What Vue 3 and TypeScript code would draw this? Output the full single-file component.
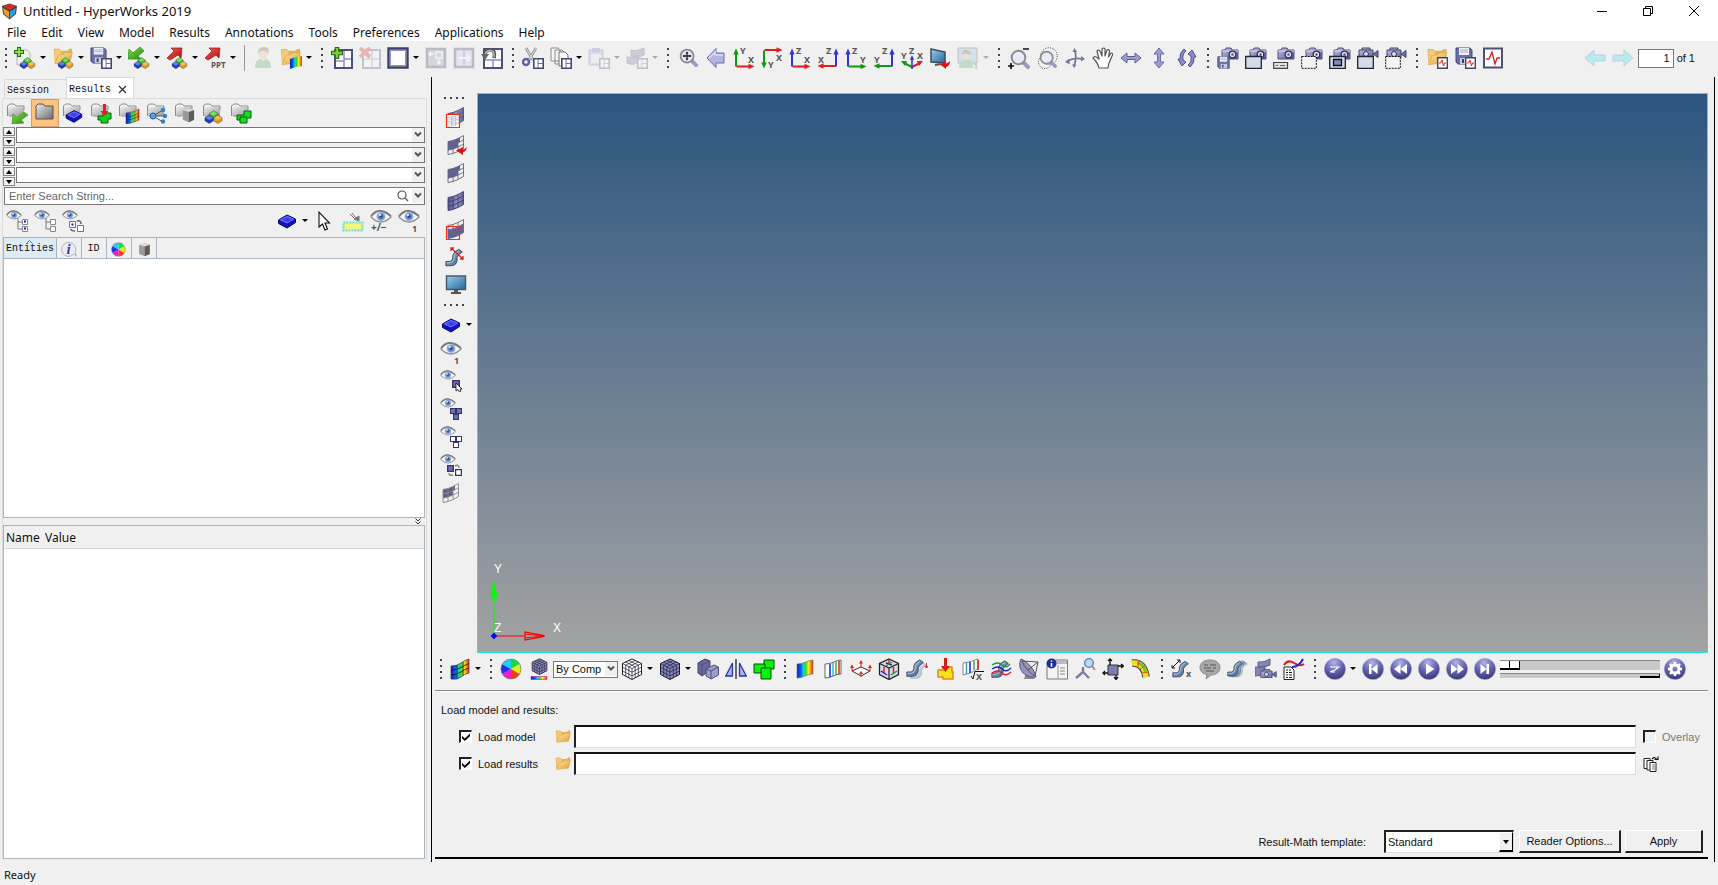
<script setup lang="ts">
import { h, ref } from 'vue'

interface Tool {
  icon: string
  label: string
  drop?: boolean
  off?: boolean
  active?: boolean
}

type Glyph = [x: number, y: number, text: string, kind?: string]

const glyphs: Record<string, Glyph[]> = {
  ppt: [[7, 21, 'PPT', 'tiny']],
  'ax-xy': [[7, 7, 'Y'], [15, 16, 'X']],
  'ax-xyb': [[7, 21, 'Y'], [15, 14, 'X']],
  'ax-xz': [[7, 7, 'Z'], [15, 16, 'X']],
  'ax-xzr': [[9, 7, 'Z'], [1, 16, 'X']],
  'ax-yz': [[7, 7, 'Z'], [15, 16, 'Y']],
  'ax-yzr': [[9, 7, 'Z'], [1, 16, 'Y']],
  'ax-iso': [[0, 12, 'Y'], [8, 7, 'Z'], [16, 12, 'X']],
  'user-view': [[16, 22, '1']],
  'eye-pm': [[1, 21, '+/−', 'wide']],
  'eye-one': [[14, 22, '1']],
  info: [[8, 17, 'i', 'info']],
  derived: [[14, 22, 'X']],
  trace: [[15, 19, 'x']],
}

function Icon(props: { name: string }) {
  const texts = (glyphs[props.name] ?? []).map(([x, y, text, kind]) => h('text', { x, y, class: ['glyph', kind] }, text))
  return h('svg', { class: 'ico', viewBox: '0 0 22 22' }, [h('use', { href: '#i-' + props.name }), ...texts])
}
Icon.props = ['name']

const t = (icon: string, label: string, extra: Partial<Tool> = {}): Tool => ({ icon, label, ...extra })
const drop = { drop: true }
const off = { off: true }

const menus = ['File', 'Edit', 'View', 'Model', 'Results', 'Annotations', 'Tools', 'Preferences', 'Applications', 'Help']

const topGroups: Tool[][] = [
  [
    t('new', 'New session', drop), t('open', 'Open session', drop), t('save', 'Save session', drop),
    t('import', 'Import', drop), t('export', 'Export', drop), t('ppt', 'Export to PPT', drop),
    t('sep', ''),
    t('user', 'User profile', off), t('results', 'Open results', drop),
  ],
  [
    t('win-add', 'Add page'), t('win-del', 'Delete page', off), t('win', 'Page layout', drop),
    t('win-expand', 'Expand window', off), t('win-shift', 'Shift window', off), t('win-swap', 'Swap windows'),
  ],
  [
    t('cut', 'Cut window'), t('copy', 'Copy window', drop),
    t('paste', 'Paste window', { drop: true, off: true }), t('overlay', 'Overlay window', { drop: true, off: true }),
  ],
  [
    t('fit', 'Fit view'), t('back', 'Previous view'), t('ax-xy', 'XY top'), t('ax-xyb', 'XY bottom'),
    t('ax-xz', 'XZ left'), t('ax-xzr', 'XZ right'), t('ax-yz', 'YZ front'), t('ax-yzr', 'YZ rear'),
    t('ax-iso', 'Isometric'), t('reverse', 'Reverse view'), t('user-view', 'User views', { drop: true, off: true }),
  ],
  [
    t('zoom-io', 'Zoom in or out'), t('zoom-box', 'Circle zoom'), t('rotate', 'Rotate'), t('pan', 'Pan'),
    t('h-move', 'Rotate left and right'), t('v-move', 'Rotate up and down'), t('spin', 'Spin'),
  ],
  [
    t('cam-save', 'Save image'), t('cam-page', 'Capture page'), t('cam-panel', 'Capture panel'),
    t('cam-area', 'Capture area'), t('cam-window', 'Capture window'), t('vid-page', 'Record page'),
    t('vid-area', 'Record area'),
  ],
  [t('wave-open', 'Open report'), t('wave-save', 'Save report'), t('wave', 'Report')],
]

const browserTools: Tool[] = [
  t('f-import', 'Import'), t('f-plain', 'Folder view', { active: true }), t('f-comp', 'Components'),
  t('f-load', 'Loads'), t('f-contour', 'Contours'), t('f-tree', 'Systems'), t('f-part', 'Parts'),
  t('f-asm', 'Assemblies'), t('f-set', 'Sets'),
]

const treeTools: Tool[] = [t('eye-all', 'Show all'), t('eye-none', 'Hide all'), t('eye-rev', 'Reverse display')]
const pickTools: Tool[] = [
  t('block', 'Entity type', drop), t('cursor', 'Select'), t('isolate', 'Isolate'),
  t('eye-pm', 'Show or hide'), t('eye-one', 'Show one'),
]

const sideA: Tool[] = [
  t('m-box', 'Mask window'), t('m-rev', 'Reverse mask'), t('m-mask', 'Mask'), t('m-all', 'Unmask all'),
  t('m-out', 'Mask outside'), t('m-adj', 'Unmask adjacent'), t('monitor', 'Display'),
]
const sideB: Tool[] = [
  t('block', 'Entity type', drop), t('eye-one', 'Isolate one'), t('eye-pick', 'Show picked'),
  t('eye-fill', 'Show all'), t('eye-open', 'Hide all'), t('eye-swap', 'Reverse'), t('m-grey', 'Mask elements'),
]

const modeTools: Tool[] = [t('contour-mesh', 'Load results', drop)]
const colorTools: Tool[] = [t('wheel', 'Colors'), t('cube-color', 'Color mode')]
const meshTools: Tool[] = [
  t('cube-wire', 'Wireframe', drop), t('cube-solid', 'Shaded', drop), t('parts', 'Transparency'),
  t('mirror', 'Symmetry'), t('green', 'Entity sets'),
]
const plotTools: Tool[] = [
  t('contour', 'Contour'), t('iso', 'Iso surface'), t('vector', 'Vector'), t('tensor', 'Tensor'),
  t('deform', 'Deformed'), t('free-body', 'Free body'), t('derived', 'Derived results'), t('stream', 'Streamlines'),
  t('dish', 'Tracking'), t('query', 'Query'), t('measure', 'Measures'), t('section', 'Section cut'), t('bend', 'Exploded view'),
]
const noteTools: Tool[] = [
  t('trace', 'Tracing'), t('note', 'Notes'), t('frames', 'Frames'), t('view-cam', 'View camera'), t('curves', 'Build plots'),
]
const playTools: Tool[] = [
  t('b-mode', 'Animation mode', drop), t('b-first', 'First frame'), t('b-prev', 'Previous frame'),
  t('b-play', 'Play'), t('b-next', 'Next frame'), t('b-last', 'Last frame'),
]

const search = ref('')
const page = ref('1')
const loadModel = ref(true)
const loadResults = ref(true)
const modelFile = ref('')
const resultFile = ref('')
const speed = ref(0)
const frame = ref(100)
</script>

<template>
  <div class="app">
    <svg class="defs" width="0" height="0" aria-hidden="true">
      <defs>
        <linearGradient id="g-steel" x1="0" y1="0" x2="1" y2="1"><stop offset="0" stop-color="#c4c4ea" /><stop offset="1" stop-color="#56568e" /></linearGradient>
        <linearGradient id="g-folder" x1="0" y1="0" x2="1" y2="1"><stop offset="0" stop-color="#fce6a4" /><stop offset="1" stop-color="#e0a030" /></linearGradient>
        <linearGradient id="g-grey" x1="0" y1="0" x2="1" y2="1"><stop offset="0" stop-color="#ececec" /><stop offset="1" stop-color="#6c6c6c" /></linearGradient>
        <linearGradient id="g-red" x1="0" y1="0" x2="1" y2="1"><stop offset="0" stop-color="#f0605c" /><stop offset="1" stop-color="#b00a10" /></linearGradient>
        <linearGradient id="g-green" x1="0" y1="0" x2="1" y2="1"><stop offset="0" stop-color="#8be04e" /><stop offset="1" stop-color="#1d8a0d" /></linearGradient>
        <linearGradient id="g-screen" x1="0" y1="0" x2="1" y2="1"><stop offset="0" stop-color="#9cd0f0" /><stop offset="1" stop-color="#22629c" /></linearGradient>
        <linearGradient id="g-tube" x1="0" y1="0" x2="1" y2="1"><stop offset="0" stop-color="#a5bcd4" /><stop offset="1" stop-color="#3d5f88" /></linearGradient>
        <linearGradient id="g-mesh" x1="0" y1="0" x2="1" y2="0"><stop offset="0" stop-color="#50508c" /><stop offset=".6" stop-color="#9494cc" /><stop offset="1" stop-color="#64649c" /></linearGradient>
        <linearGradient id="g-rain" x1="0" y1="0" x2="1" y2="0">
          <stop offset="0" stop-color="#0a1ec8" /><stop offset=".25" stop-color="#0a5ef0" /><stop offset=".4" stop-color="#12d8c8" />
          <stop offset=".55" stop-color="#30d830" /><stop offset=".72" stop-color="#f4f020" /><stop offset="1" stop-color="#f03010" />
        </linearGradient>
        <radialGradient id="g-ball" cx=".45" cy=".2" r=".8"><stop offset="0" stop-color="#b4b4ea" /><stop offset=".5" stop-color="#6868b4" /><stop offset="1" stop-color="#363674" /></radialGradient>
        <radialGradient id="g-iris"><stop offset="0" stop-color="#16244e" /><stop offset=".3" stop-color="#4468ac" /><stop offset="1" stop-color="#a4c4f0" /></radialGradient>
      </defs>

      <!-- shared parts -->
      <symbol id="p-block" viewBox="0 0 9 9" overflow="visible">
        <path d="M.5 3.2 4.5.6 8.5 3.2V6L4.5 8.6.5 6Z" fill="currentColor" stroke="#111" stroke-opacity=".45" stroke-width=".7" />
        <path d="M1 3.2 4.5 1 8 3.2 4.5 5.4Z" fill="#fff" opacity=".35" />
      </symbol>
      <symbol id="p-rgb" viewBox="0 0 17 13">
        <use href="#p-block" x="4" y="0" width="9" height="9" color="#3cc024" />
        <use href="#p-block" x="0" y="4" width="9" height="9" color="#1a3cc8" />
        <use href="#p-block" x="8" y="4" width="9" height="9" color="#e09c1c" />
      </symbol>
      <symbol id="p-folder" viewBox="0 0 22 22">
        <path d="M1 3Q1 2 2 2H7L9 4H16L18 2H21V9L19 17H2Z" fill="#e2b25c" />
        <path d="M2 3H7L9 5V8L5 10 2 17Z" fill="#f2cc7c" />
        <path d="M6 9 11 8 14 6 21.500 6 17 17 2 18.500Z" fill="url(#g-folder)" stroke="#d09a3c" stroke-width=".5" />
      </symbol>
      <symbol id="p-grey-folder" viewBox="0 0 22 22">
        <path d="M1.500 14V4L3.500 2H8L10 4H18V8M8 14H3" fill="none" stroke="#8c8c8c" />
        <path d="M2 5H18V14H2Z" fill="url(#g-grey)" opacity=".65" />
      </symbol>
      <symbol id="p-floppy" viewBox="0 0 18 18">
        <path d="M1 1H15L17 3V17H3L1 15Z" fill="#6a6fa6" stroke="#44487c" />
        <path d="M4 1H14V8H4Z" fill="#eef0fa" /><path d="M5 3H13M5 5H13" stroke="#a8acc8" />
        <path d="M5 11H14V17H5Z" fill="#c8cce0" /><path d="M7 12H9V16H7Z" fill="#3a3e6c" />
      </symbol>
      <symbol id="p-win" viewBox="0 0 11 11">
        <path d="M.8.800H10.200V10.200H.800Z" fill="#fff" stroke="#44486c" stroke-width="1.600" /><path d="M5 1V10M5 5.500H10" stroke="#6a6ea8" />
      </symbol>
      <symbol id="p-wave" viewBox="0 0 11 12">
        <path d="M.7.700H10.300V11.300H.700Z" fill="#fff" stroke="#404468" stroke-width="1.400" /><path d="M2 6H3.500L5 3 6.500 9 7.500 6H9" fill="none" stroke="#d82020" />
      </symbol>
      <symbol id="p-eye" viewBox="0 0 22 13">
        <path d="M1 7Q5 1 11 1T21 7Q16 12 11 12T1 7Z" fill="#f6f6f6" stroke="#909090" stroke-width="1.300" />
        <path d="M1 6Q6 0 11 1T21 6" fill="none" stroke="#7c7c7c" stroke-width="1.800" />
        <circle cx="11" cy="6.500" r="4.500" fill="url(#g-iris)" /><circle cx="9.800" cy="5" r="1.200" fill="#fff" opacity=".8" />
      </symbol>
      <symbol id="p-arrow" viewBox="0 0 6 18" overflow="visible"><path d="M3 18V5" stroke="currentColor" stroke-width="2" /><path d="M.3 6 3 0 5.700 6Z" fill="currentColor" /></symbol>
      <symbol id="p-lines" viewBox="0 0 22 22">
        <path d="M3 7.500 8 6.500 13 4.500 18.500 1.500M3 11.800 8 10.800 13 8.800 18.500 5.800M3 16.100 8 15.100 13 13.100 18.500 10.100M3 20.500 8 19.500 13 17.500 18.500 14.500M3 7.500V20.500M8 6.500V19.500M13 4.500V17.500M18.500 1.500V14.500" fill="none" stroke="currentColor" stroke-width=".9" />
      </symbol>
      <symbol id="p-cam" viewBox="0 0 18 13">
        <path d="M1 3H4L5 1H10L11 3H17V12H1Z" fill="url(#g-steel)" stroke="#50507c" />
        <path d="M1 4H17" stroke="#dcdcf4" /><circle cx="11.500" cy="7.500" r="3.300" fill="#dfe3f4" stroke="#2c2c58" stroke-width="1.300" /><circle cx="11.500" cy="7.500" r="1.300" fill="#5c5c8c" />
      </symbol>
      <symbol id="p-vid" viewBox="0 0 21 12">
        <path d="M1 3H15V11H1ZM15 7 20 3.500V10.500L15 7M4 3V1H12V3" fill="url(#g-steel)" stroke="#44446c" /><circle cx="8" cy="7" r="2.500" fill="#d8dcf0" stroke="#33335e" />
      </symbol>
      <symbol id="p-lens" viewBox="0 0 20 20">
        <path d="M13 13 18 18" stroke="#9a9ac8" stroke-width="4" stroke-linecap="round" />
        <circle cx="8.500" cy="8.500" r="6.800" fill="#e8ecfa" stroke="#8c8c94" stroke-width="2" />
      </symbol>
      <symbol id="p-ball" viewBox="0 0 22 22"><circle cx="11" cy="11" r="10.600" fill="url(#g-ball)" stroke="#9a9ac8" stroke-width=".6" /></symbol>
      <symbol id="p-cube" viewBox="0 0 22 22">
        <path d="M11 1 20.500 5.500V16.500L11 21.500 1.500 16.500V5.500Z" fill="currentColor" stroke="#1c1c30" />
        <path d="M1.500 5.500 11 10.500 20.500 5.500M11 10.500V21.500M4.600 4 14.200 8.800V19.800M7.800 2.500 17.300 7.200V18.200M17.400 4 7.800 8.800V19.800M14.200 2.500 4.700 7.200V18.200M1.500 9.200 11 14.200 20.500 9.200M1.500 12.900 11 17.900 20.500 12.900" fill="none" stroke="#1c1c30" stroke-width=".7" />
      </symbol>
      <symbol id="p-tube" viewBox="0 0 22 22">
        <path d="M1 15H6Q9 14 9 11V8Q10 4 16 1L20 4Q15 7 14 10V14Q13 20 7 20H1Z" fill="url(#g-tube)" stroke="#2a4262" />
        <path d="M2 16.500H6Q10.500 16 10.500 11.500V8.500Q12 5 16 3" fill="none" stroke="#c8d8e8" stroke-width=".9" />
      </symbol>
      <symbol id="p-sq" viewBox="0 0 7 7"><path d="M.6.600H6.400V6.400H.600Z" fill="currentColor" stroke="#34346c" stroke-width="1.200" /></symbol>
      <symbol id="p-tree" viewBox="0 0 11 14"><path d="M1 0V11H5M1 4H5" fill="none" stroke="#777" /><path d="M5.500 1.500H10.500V6.500H5.500ZM5.500 8.500H10.500V13.500H5.500Z" fill="#fff" stroke="#888" /></symbol>

      <!-- file and page tools -->
      <symbol id="i-new" viewBox="0 0 22 22"><path d="M3 3H13L16 6V18H3Z" fill="#f0f0f0" stroke="#b4b4b4" /><path d="M5 0V10M0 5H10" stroke="#247010" stroke-width="4" /><path d="M5 1V9M1 5H9" stroke="#8ade4c" stroke-width="2" /><use href="#p-rgb" x="5" y="10" width="17" height="12" /></symbol>
      <symbol id="i-open" viewBox="0 0 22 22"><use href="#p-folder" x="0" y="0" width="22" height="20" /><use href="#p-rgb" x="5" y="10" width="17" height="12" /></symbol>
      <symbol id="i-save" viewBox="0 0 22 22"><use href="#p-floppy" x="0" y="0" width="17" height="17" /><use href="#p-win" x="11" y="11" width="11" height="11" /></symbol>
      <symbol id="i-import" viewBox="0 0 22 22"><path d="M12 0 16 4 10 9 13 12 0 12 1 2 5 6Z" fill="url(#g-green)" stroke="#2c8a1a" stroke-width=".7" /><use href="#p-rgb" x="5" y="10" width="17" height="12" /></symbol>
      <symbol id="i-export" viewBox="0 0 22 22"><path d="M1 11 8 4 5 1 16 1 15 11 12 8 4 13Z" fill="url(#g-red)" stroke="#a01010" stroke-width=".7" /><use href="#p-rgb" x="5" y="10" width="17" height="12" /></symbol>
      <symbol id="i-ppt" viewBox="0 0 22 22"><path d="M1 11 8 4 5 1 16 1 15 11 12 8 4 13Z" fill="url(#g-red)" stroke="#a01010" stroke-width=".7" /></symbol>
      <symbol id="i-user" viewBox="0 0 22 22"><path d="M3 21Q3 13 8 12L11 14 14 12Q19 13 19 21Z" fill="#48a860" /><ellipse cx="11" cy="7" rx="4.500" ry="6" fill="#e8c090" /><path d="M6 7Q5 0 12 0T16 7Q14 3 10 4Q7 4 6 7Z" fill="#8a6a40" /></symbol>
      <symbol id="i-results" viewBox="0 0 22 22"><use href="#p-folder" x="0" y="0" width="21" height="21" /><path d="M10 12 16 10 22 9V19L16 20 10 22Z" fill="url(#g-rain)" /></symbol>
      <symbol id="i-win" viewBox="0 0 22 22"><path d="M1.500 1.500H20.500V20.500H1.500Z" fill="#fdfdff" stroke="#3c4064" stroke-width="2.400" /><path d="M3.500 3.500H18.500V18.500H3.500Z" fill="none" stroke="#8c90cc" /></symbol>
      <symbol id="i-win-add" viewBox="0 0 22 22"><path d="M4 3H21V21H4Z" fill="#fdfdff" stroke="#4c5078" stroke-width="2" /><path d="M13 4V20M13 12H20M5 14H13" stroke="#8c90cc" stroke-width="1.500" /><path d="M6 0V12M0 6H12" stroke="#2a6a10" stroke-width="4.600" /><path d="M6 1V11M1 6H11" stroke="#7ccc3c" stroke-width="2.400" /></symbol>
      <symbol id="i-win-del" viewBox="0 0 22 22"><path d="M4 3H21V21H4Z" fill="#fdfdff" stroke="#4c5078" stroke-width="2" /><path d="M13 4V20M5 12H20" stroke="#8c90cc" stroke-width="1.500" /><path d="M1 1 11 10M11 1 1 10" stroke="#d02020" stroke-width="4" /></symbol>
      <symbol id="i-win-expand" viewBox="0 0 22 22"><path d="M2 2H20V20H2Z" fill="#8c90b8" stroke="#34375c" stroke-width="2.500" /><path d="M4 7H9M6 5 4 7 6 9M11 5H17V11H11ZM14 12V17M12 15 14 17 16 15" fill="none" stroke="#fff" stroke-width="1.500" /></symbol>
      <symbol id="i-win-shift" viewBox="0 0 22 22"><path d="M2 2H20V20H2Z" fill="#c4c8e4" stroke="#34375c" stroke-width="2.500" /><path d="M11 3V19" stroke="#7074b0" stroke-width="2" /><path d="M6 11H16M14 8 17 11 14 14" fill="none" stroke="#fff" stroke-width="1.800" /></symbol>
      <symbol id="i-win-swap" viewBox="0 0 22 22"><path d="M3 2H21V21H3Z" fill="#fdfdff" stroke="#4c5078" stroke-width="2" /><path d="M12 12V20M4 13H20" stroke="#8c90cc" stroke-width="1.500" /><path d="M13 11Q15 3 9 3Q4 3 4 8" fill="none" stroke="#555" stroke-width="3.600" /><path d="M13 10Q14 3.500 9 3.500Q4.500 4 4 8" fill="none" stroke="#b4b4b4" stroke-width="1.600" /><path d="M0 7H8L4 13Z" fill="#666" /></symbol>
      <symbol id="i-cut" viewBox="0 0 22 22"><path d="M4 1 11 13M14 1 7 13" stroke="#909090" stroke-width="2.600" /><path d="M4 1 11 13M14 1 7 13" stroke="#e4e4e4" /><circle cx="4" cy="15" r="3" fill="none" stroke="#5c60b0" stroke-width="2.400" /><use href="#p-win" x="11" y="11" width="11" height="11" /></symbol>
      <symbol id="i-copy" viewBox="0 0 22 22"><path d="M1 1H8L10 3V14H1ZM5 3H12L15 6V17H5Z" fill="#f4f4f4" stroke="#8c8c8c" /><path d="M9 5H15L18 8V19H9Z" fill="#fcfcfc" stroke="#707070" /><use href="#p-win" x="11" y="11" width="11" height="11" /></symbol>
      <symbol id="i-paste" viewBox="0 0 22 22"><path d="M1 3H15V18H1Z" fill="#a4a8dc" stroke="#6468a4" /><path d="M4 1H12V5H4Z" fill="#777aaa" /><path d="M3 7H13V16H3Z" fill="#e8eaf8" /><use href="#p-win" x="11" y="11" width="11" height="11" /></symbol>
      <symbol id="i-overlay" viewBox="0 0 22 22"><path d="M5 3Q10 5 18 1V8Q10 12 5 9ZM1 10Q6 12 13 8V15Q6 19 1 16Z" fill="#70749c" stroke="#505070" /><use href="#p-win" x="11" y="11" width="11" height="11" /></symbol>

      <!-- view tools -->
      <symbol id="i-fit" viewBox="0 0 22 22"><use href="#p-lens" x="2" y="1" width="19" height="19" /><path d="M10 5V13M6 9H14" stroke="#223" stroke-width="1.300" /><path d="M8.500 6.500 10 4.500 11.500 6.500ZM8.500 11.500 10 13.500 11.500 11.500ZM7.500 7.500 5.500 9 7.500 10.500ZM12.500 7.500 14.500 9 12.500 10.500Z" fill="#223" /></symbol>
      <symbol id="i-back" viewBox="0 0 22 22"><path d="M2 11 11 1.500V6H19V16H11V20.500Z" fill="#b4b4e0" stroke="#6c6ca8" /><path d="M4 11 10 5V8H18" fill="none" stroke="#dedef6" stroke-width="1.500" /></symbol>
      <symbol id="i-ax-xy" viewBox="0 0 22 22"><use href="#p-arrow" x="0" y="1" width="6" height="19" color="#0c9a10" /><use href="#p-arrow" width="6" height="19" transform="translate(22 16.500) rotate(90)" color="#e01c1c" /></symbol>
      <symbol id="i-ax-xyb" viewBox="0 0 22 22"><use href="#p-arrow" width="6" height="19" transform="translate(6 22) rotate(180)" color="#0c9a10" /><use href="#p-arrow" width="6" height="19" transform="translate(22 0) rotate(90)" color="#e01c1c" /></symbol>
      <symbol id="i-ax-xz" viewBox="0 0 22 22"><use href="#p-arrow" width="6" height="19" transform="translate(22 16.500) rotate(90)" color="#e01c1c" /><use href="#p-arrow" x="0" y="1" width="6" height="19" color="#3434d0" /></symbol>
      <symbol id="i-ax-xzr" viewBox="0 0 22 22"><use href="#p-arrow" width="6" height="19" transform="translate(0 22) rotate(-90)" color="#e01c1c" /><use href="#p-arrow" x="16" y="1" width="6" height="19" color="#3434d0" /></symbol>
      <symbol id="i-ax-yz" viewBox="0 0 22 22"><use href="#p-arrow" width="6" height="19" transform="translate(22 16.500) rotate(90)" color="#0c9a10" /><use href="#p-arrow" x="0" y="1" width="6" height="19" color="#3434d0" /></symbol>
      <symbol id="i-ax-yzr" viewBox="0 0 22 22"><use href="#p-arrow" width="6" height="19" transform="translate(0 22) rotate(-90)" color="#0c9a10" /><use href="#p-arrow" x="16" y="1" width="6" height="19" color="#3434d0" /></symbol>
      <symbol id="i-ax-iso" viewBox="0 0 22 22"><path d="M11 20 3 16" stroke="#0c9a10" stroke-width="2" /><path d="M0 14H6L4 19Z" fill="#0c9a10" /><path d="M11 20 19 16" stroke="#e01c1c" stroke-width="2" /><path d="M22 14H16L18 19Z" fill="#e01c1c" /><use href="#p-arrow" x="8" y="8" width="6" height="14" color="#3434d0" /></symbol>
      <symbol id="i-reverse" viewBox="0 0 22 22"><path d="M2 2 16 5V16L2 15Z" fill="url(#g-screen)" stroke="#3a4a5c" stroke-width="1.500" /><path d="M6 18 12 17" stroke="#555" stroke-width="2" /><path d="M21 14Q21 19 17 20V22L11 17.500 17 14V16.500Q19 16 21 14Z" fill="#e01414" /></symbol>
      <symbol id="i-user-view" viewBox="0 0 22 22"><path d="M1 1H20V16H1Z" fill="#90bce0" stroke="#456" /><ellipse cx="9" cy="8" rx="3.500" ry="4.500" fill="#e8c090" /><path d="M5 8Q5 2 10 3T13 8Q9 5 5 8Z" fill="#7a5a30" /><path d="M2 21Q2 14 7 13H12Q16 14 16 21Z" fill="#48a860" /></symbol>
      <symbol id="i-zoom-io" viewBox="0 0 22 22"><use href="#p-lens" x="2" y="2" width="20" height="20" /><path d="M15 2H21M0 19H6M3 16V22" stroke="#111" stroke-width="1.700" /></symbol>
      <symbol id="i-zoom-box" viewBox="0 0 22 22"><circle cx="13" cy="9" r="8.300" fill="none" stroke="#333" stroke-dasharray="1 1.500" /><circle cx="9" cy="15" r="6.500" fill="none" stroke="#333" stroke-dasharray="1 1.500" /><use href="#p-lens" x="3" y="3" width="18" height="18" /></symbol>
      <symbol id="i-rotate" viewBox="0 0 22 22"><path d="M3 14Q11 10 18 12M10 19Q13 11 11 4" fill="none" stroke="#74789c" stroke-width="1.800" /><path d="M8.500 5 10.500 1 13 5ZM17 9 21 12 17 14.500ZM5 12 1 15 6 17.500ZM8 17.500 10 21 12.500 17.500Z" fill="#74789c" /></symbol>
      <symbol id="i-pan" viewBox="0 0 22 22"><path d="M7 21Q6 16 1 11Q3 8 7 12L5 4Q7 2 8.500 5L10 9V2Q12 0 13 2V9L15 3Q17 2 17.500 4L16.500 10 19 6Q21 6 20.500 8L17 16 16 21Z" fill="#fff" stroke="#555" stroke-width="1.200" stroke-linejoin="round" /></symbol>
      <symbol id="i-h-move" viewBox="0 0 22 22"><path d="M1 11 7 6V9.500H15V6L21 11 15 16V12.500H7V16Z" fill="#9c9cd4" stroke="#5c5c98" /></symbol>
      <symbol id="i-v-move" viewBox="0 0 22 22"><path d="M11 1 16 7H12.500V15H16L11 21 6 15H9.500V7H6Z" fill="#9c9cd4" stroke="#6c6ca8" /></symbol>
      <symbol id="i-spin" viewBox="0 0 22 22"><path d="M8 2Q3 6 4 12L2 12 6 19 10 15 7 13Q6 7 10 4ZM14 20Q19 16 18 10H20L16 3 12 7 15 9Q16 15 12 18Z" fill="#8c8cc8" stroke="#50508c" /></symbol>
      <symbol id="i-cam-save" viewBox="0 0 22 22"><use href="#p-cam" x="4" y="0" width="18" height="13" /><use href="#p-floppy" x="0" y="9" width="13" height="13" /></symbol>
      <symbol id="i-cam-page" viewBox="0 0 22 22"><use href="#p-cam" x="4" y="0" width="18" height="13" /><path d="M.7 9.500H16.300V21.300H.700Z" fill="#d4dce8" stroke="#223" stroke-width="1.300" /></symbol>
      <symbol id="i-cam-panel" viewBox="0 0 22 22"><use href="#p-cam" x="4" y="0" width="18" height="13" /><path d="M.7 15.500H14.500V21.300H.700Z" fill="#e0e4d8" stroke="#444" stroke-width="1.200" /><path d="M3 18.500H5M7 18.500H12" stroke="#666" /></symbol>
      <symbol id="i-cam-area" viewBox="0 0 22 22"><use href="#p-cam" x="4" y="0" width="18" height="13" /><path d="M.7 9.500H15.300V21.300H.700Z" fill="#f4f4f4" stroke="#111" stroke-dasharray="2 1" /></symbol>
      <symbol id="i-cam-window" viewBox="0 0 22 22"><use href="#p-cam" x="4" y="0" width="18" height="13" /><path d="M.7 9.500H16.300V21.300H.700Z" fill="#d4dce8" stroke="#223" stroke-width="1.300" /><path d="M4.500 12.500H12.500V18.500H4.500Z" fill="#8088c0" stroke="#111" stroke-width="1.300" /></symbol>
      <symbol id="i-vid-page" viewBox="0 0 22 22"><use href="#p-vid" x="1" y="0" width="21" height="12" /><path d="M.7 9.500H16.300V21.300H.700Z" fill="#d4dce8" stroke="#223" stroke-width="1.300" /></symbol>
      <symbol id="i-vid-area" viewBox="0 0 22 22"><use href="#p-vid" x="1" y="0" width="21" height="12" /><path d="M.7 9.500H15.300V21.300H.700Z" fill="#f4f4f4" stroke="#111" stroke-dasharray="2 1" /></symbol>
      <symbol id="i-wave-open" viewBox="0 0 22 22"><use href="#p-folder" x="0" y="0" width="22" height="21" /><use href="#p-wave" x="11" y="10" width="11" height="12" /></symbol>
      <symbol id="i-wave-save" viewBox="0 0 22 22"><use href="#p-floppy" x="1" y="0" width="18" height="18" /><use href="#p-wave" x="11" y="10" width="11" height="12" /></symbol>
      <symbol id="i-wave" viewBox="0 0 22 22"><path d="M2 1.500H20V20.500H2Z" fill="#fff" stroke="#4c507c" stroke-width="2" /><path d="M4 12H7L10 5 13 17 15 11H18" fill="none" stroke="#d82020" stroke-width="1.300" /></symbol>
      <symbol id="i-nav" viewBox="0 0 22 22"><path d="M1 11 10 3V8H21V14H10V19Z" fill="#bce8ee" stroke="#acd8e0" /></symbol>

      <!-- browser tools -->
      <symbol id="i-f-import" viewBox="0 0 22 22"><use href="#p-grey-folder" width="22" height="22" /><path d="M18 10 22 13 15 18 18 21 6 22 7 12 11 15Z" fill="url(#g-green)" stroke="#3a8a18" stroke-width=".6" /></symbol>
      <symbol id="i-f-plain" viewBox="0 0 22 22"><path d="M2 4 4 2H9L11 4H19V17H2Z" fill="url(#g-grey)" stroke="#555" /></symbol>
      <symbol id="i-block" viewBox="0 0 22 22"><path d="M2.500 10 11 5 19.500 9V12.500L11 18 2.500 13.500Z" fill="#1414b4" stroke="#06066c" /><path d="M3.500 10 11 5.500 18.500 9.200 11 13.500Z" fill="#3c40ee" /><path d="M4.500 10 11 6.500 17.500 9.200 11 12.800Z" fill="none" stroke="#7c80ff" stroke-width=".8" /></symbol>
      <symbol id="i-f-comp" viewBox="0 0 22 22"><use href="#p-grey-folder" width="22" height="22" /><use href="#i-block" x="2" y="4" width="20" height="20" /></symbol>
      <symbol id="i-f-load" viewBox="0 0 22 22"><use href="#p-grey-folder" width="22" height="22" /><path d="M8 14H13V11H21V17H18V21H11V18H8Z" fill="#10d020" stroke="#075a0c" /><path d="M13 2H16V9H18.500L14.500 14 10.500 9H13Z" fill="#e02020" /></symbol>
      <symbol id="i-f-contour" viewBox="0 0 22 22"><use href="#p-grey-folder" width="22" height="22" /><path d="M8 11Q15 11 21 7V18Q15 21 8 22Z" fill="url(#g-rain)" stroke="#333" stroke-width=".5" /><path d="M12 11V21M17 9V20M8 15Q15 15 21 11M8 18Q15 18 21 14" fill="none" stroke="#222" stroke-width=".6" /></symbol>
      <symbol id="i-f-tree" viewBox="0 0 22 22"><use href="#p-grey-folder" width="22" height="22" /><path d="M7 14 17 8M7 14H18M7 14 17 20" stroke="#555" /><circle cx="7" cy="14" r="3" fill="#58a0e8" stroke="#1a5aa8" /><circle cx="17" cy="8" r="2.200" fill="#2a80d8" /><circle cx="19" cy="14" r="2.200" fill="#2a80d8" /><circle cx="17" cy="19.500" r="2.200" fill="#2a80d8" /></symbol>
      <symbol id="i-part" viewBox="0 0 22 22"><path d="M5 6 12 4 18 6V17L12 20 5 17Z" fill="#999" /><path d="M5 6 12 4 18 6 12 8Z" fill="#ddd" /><path d="M12 8 18 6V17L12 20Z" fill="#5c5c5c" /></symbol>
      <symbol id="i-f-part" viewBox="0 0 22 22"><use href="#p-grey-folder" width="22" height="22" /><use href="#i-part" x="4" y="3" width="20" height="19" /></symbol>
      <symbol id="i-f-asm" viewBox="0 0 22 22"><use href="#p-grey-folder" width="22" height="22" /><use href="#p-rgb" x="1" y="8" width="21" height="14" /></symbol>
      <symbol id="i-f-set" viewBox="0 0 22 22"><use href="#p-grey-folder" width="22" height="22" /><path d="M7 13H14V9H21V16H17V21H10V18H7ZM10 18V15H17" fill="#10e020" stroke="#075a0c" /></symbol>
      <symbol id="i-eye-all" viewBox="0 0 22 22"><use href="#p-eye" x="0" y="0" width="16" height="10" /><use href="#p-tree" x="11" y="8" width="11" height="14" /><path d="M18 11.500H20M18 18.500H20" stroke="#1414c8" stroke-width="2" /></symbol>
      <symbol id="i-eye-none" viewBox="0 0 22 22"><use href="#p-eye" x="0" y="0" width="16" height="10" /><use href="#p-tree" x="11" y="8" width="11" height="14" /></symbol>
      <symbol id="i-eye-rev" viewBox="0 0 22 22"><use href="#p-eye" x="0" y="0" width="16" height="10" /><path d="M7.500 11.500H13.500V17.500H7.500ZM15.500 15.500H21.500V21.500H15.500Z" fill="#fff" stroke="#777" /><path d="M9.500 14.500H11.500" stroke="#1414c8" stroke-width="2" /><path d="M15 11Q19 10 19 14M13 21Q9 21 9 19" fill="none" stroke="#666" stroke-width="1.500" /></symbol>
      <symbol id="i-cursor" viewBox="0 0 22 22"><path d="M5 2V17L8.500 14 11 20 13.500 19 11 13H15.500Z" fill="#fff" stroke="#111" stroke-width="1.100" /></symbol>
      <symbol id="i-isolate" viewBox="0 0 22 22"><path d="M1.500 12.500H20.500V20.500H1.500Z" fill="#f6f47c" stroke="#64dce0" stroke-dasharray="2 1" stroke-width="2" /><path d="M8 4 12 8M10 3 14 8M12 9 17 11 17 6Z" fill="#777" stroke="#777" /></symbol>
      <symbol id="i-eye-pm" viewBox="0 0 22 22"><use href="#p-eye" x="0" y="0" width="22" height="13" /></symbol>
      <symbol id="i-eye-one" viewBox="0 0 22 22"><use href="#p-eye" x="0" y="0" width="22" height="13" /></symbol>
      <symbol id="i-info" viewBox="0 0 22 22"><path d="M11 3A8.500 8.500 0 1 0 17 17L20 20 18.500 15A8.500 8.500 0 0 0 11 3Z" fill="#ececf2" stroke="#a4a4b0" /></symbol>
      <symbol id="i-wheel" viewBox="0 0 22 22">
        <path d="M11 11V1A10 10 0 0 1 19.700 6Z" fill="#18d84c" /><path d="M11 11 19.700 6A10 10 0 0 1 19.700 16Z" fill="#d8f01c" /><path d="M11 11 19.700 16A10 10 0 0 1 11 21Z" fill="#f43c1c" /><path d="M11 11V21A10 10 0 0 1 2.300 16Z" fill="#f01cc8" /><path d="M11 11 2.300 16A10 10 0 0 1 2.300 6Z" fill="#2c2cf0" /><path d="M11 11 2.300 6A10 10 0 0 1 11 1Z" fill="#1cd0f4" /><circle cx="11" cy="11" r="10" fill="none" stroke="#777" stroke-width=".7" />
      </symbol>

      <!-- mask tools -->
      <symbol id="i-m-box" viewBox="0 0 22 22"><path d="M3 7.500 8 6.500 13 4.500 18.500 1.500V14.500L14 17V9H3Z" fill="url(#g-mesh)" /><use href="#p-lines" width="22" height="22" color="#50506c" /><path d="M1.500 8.500H14.500V21.500H1.500Z" fill="#fff" fill-opacity=".7" stroke="#f03018" stroke-width="1.200" /><path d="M4 13H12M4 17H12M6.500 10V20M10.500 10V20" stroke="#bbb" stroke-width=".8" /></symbol>
      <symbol id="i-m-mask" viewBox="0 0 22 22"><path d="M3 7.500 8 6.500 13 4.500V13.100L8 15.100 3 16.100Z" fill="#60609c" /><path d="M13 4.500 15 3.500V7.800L13 8.800Z" fill="#60609c" /><use href="#p-lines" width="22" height="22" color="#666678" /></symbol>
      <symbol id="i-m-rev" viewBox="0 0 22 22"><use href="#i-m-mask" width="22" height="22" /><path d="M22 13Q21 18 18 18V21L11 16.500 18 13V15.500Q20 15 22 13Z" fill="#e01414" /></symbol>
      <symbol id="i-m-all" viewBox="0 0 22 22"><path d="M3 7.500 8 6.500 13 4.500 18.500 1.500V14.500L13 17.500 8 19.500 3 20.500Z" fill="url(#g-mesh)" /><use href="#p-lines" width="22" height="22" color="#40406c" /></symbol>
      <symbol id="i-m-out" viewBox="0 0 22 22"><path d="M3 12 8 11 13 9 18.500 6V14.500L13 17.500 8 19.500 3 20.500Z" fill="#60609c" /><use href="#p-lines" width="22" height="22" color="#666678" /><path d="M1.500 8.500H14.500V21.500H1.500Z" fill="none" stroke="#f03018" stroke-width="1.200" /></symbol>
      <symbol id="i-m-adj" viewBox="0 0 22 22"><use href="#p-tube" x="0" y="2" width="19" height="20" /><path d="M6 2 18 13M6 5V2H9M15 13H18V10" fill="none" stroke="#e01c1c" stroke-width="1.300" /></symbol>
      <symbol id="i-monitor" viewBox="0 0 22 22"><path d="M1.500 2H20.500V15.500H1.500Z" fill="url(#g-screen)" stroke="#48586a" stroke-width="1.400" /><path d="M9 16H13V18H16V20H6V18H9Z" fill="#555" /></symbol>
      <symbol id="i-m-grey" viewBox="0 0 22 22"><path d="M3 7.500 8 6.500 13 4.500 15 3.500V8L13 9V13L8 15 3 16Z" fill="#5c5c84" /><use href="#p-lines" width="22" height="22" color="#888" /></symbol>
      <symbol id="i-eye-pick" viewBox="0 0 22 22"><use href="#p-eye" x="0" y="0" width="16" height="10" /><use href="#p-sq" x="12" y="10" width="8" height="8" color="#6c6ca8" /><path d="M16 13V21L18 19.500 19.500 22 21 21 20 19H22Z" fill="#fff" stroke="#111" stroke-width=".8" /></symbol>
      <symbol id="i-eye-fill" viewBox="0 0 22 22"><use href="#p-eye" x="0" y="0" width="16" height="10" /><g color="#7070ac"><use href="#p-sq" x="10" y="10" width="6" height="6" /><use href="#p-sq" x="16" y="10" width="6" height="6" /><use href="#p-sq" x="13" y="16" width="6" height="6" /></g></symbol>
      <symbol id="i-eye-open" viewBox="0 0 22 22"><use href="#p-eye" x="0" y="0" width="16" height="10" /><g color="#fff"><use href="#p-sq" x="10" y="10" width="6" height="6" /><use href="#p-sq" x="16" y="10" width="6" height="6" /><use href="#p-sq" x="13" y="16" width="6" height="6" /></g></symbol>
      <symbol id="i-eye-swap" viewBox="0 0 22 22"><use href="#p-eye" x="0" y="0" width="16" height="10" /><use href="#p-sq" x="7" y="11" width="7" height="7" color="#6c6ca8" /><use href="#p-sq" x="15" y="15" width="7" height="7" color="#fff" /><path d="M15 12Q19 10 19 14M13 21Q9 22 9 19" fill="none" stroke="#888" stroke-width="1.500" /></symbol>

      <!-- result tools -->
      <symbol id="i-contour-mesh" viewBox="0 0 22 22"><path d="M2 8Q8 8 12 5T20 1V15Q15 16 12 19T2 21Z" fill="url(#g-rain)" stroke="#334" stroke-width=".7" /><path d="M8 7V20.500M14 4V17.500M2 12Q8 12 12 9.500T20 5.500M2 17Q8 17 12 14T20 10" fill="none" stroke="#112" stroke-width=".8" /></symbol>
      <symbol id="i-cube-color" viewBox="0 0 22 22"><use href="#p-cube" x="3" y="0" width="17" height="17" color="#8c8cc0" /><path d="M3 18.500H19V21.500H3Z" fill="url(#g-rain)" stroke="#c018c0" stroke-width=".6" /></symbol>
      <symbol id="i-cube-wire" viewBox="0 0 22 22"><use href="#p-cube" width="22" height="22" color="#fff" /></symbol>
      <symbol id="i-cube-solid" viewBox="0 0 22 22"><use href="#p-cube" width="22" height="22" color="#8888c4" /></symbol>
      <symbol id="i-parts" viewBox="0 0 22 22"><path d="M1 5 8 1 13 3V8L9 11V15L5 18 1 15Z" fill="#68689a" stroke="#40406c" /><path d="M9 11 17 7 21.500 9V17L14 21 9 18Z" fill="#9c9cc8" stroke="#50507c" /><path d="M14 13V21M9 11 14 13 21 9M5 7V17M1 5 5 7 13 3" stroke="#50507c" fill="none" /></symbol>
      <symbol id="i-mirror" viewBox="0 0 22 22"><path d="M11 1V21" stroke="#111" stroke-width="1.200" /><path d="M7.500 5V18H.700ZM14.500 5V18H21.300Z" fill="#a8b4ec" stroke="#2838a0" stroke-width="1.300" /></symbol>
      <symbol id="i-green" viewBox="0 0 22 22"><path d="M11 2H21V11H11Z" fill="#06f406" stroke="#064c06" /><path d="M1 6H12V15H1Z" fill="#06f406" stroke="#064c06" /><path d="M8 10H18V21H8Z" fill="#06f406" stroke="#064c06" /></symbol>
      <symbol id="i-contour" viewBox="0 0 22 22"><path d="M3 6Q8 6 12 4T19 2V16Q15 16 11 18T3 20Z" fill="url(#g-rain)" stroke="#666" stroke-width=".6" /></symbol>
      <symbol id="i-iso" viewBox="0 0 22 22"><path d="M3 6Q8 6 12 4T19 2V16Q15 16 11 18T3 20Z" fill="#fff" stroke="#666" /><path d="M8 6V19" stroke="#2030e0" stroke-width="1.600" /><path d="M11 5V18" stroke="#18b0c0" stroke-width="1.300" /><path d="M14 3.500V17" stroke="#20a020" stroke-width="1.300" /><path d="M17 3V16" stroke="#e03020" stroke-width="1.600" /></symbol>
      <symbol id="i-vector" viewBox="0 0 22 22"><path d="M11 9 20 13 11 18 2 13Z" fill="#f8f8f8" stroke="#333" /><path d="M11 10V5M20 13V9M2 13V9M11 19V16" stroke="#e02020" /><path d="M11 2 13 5.500H9ZM20 6.500 22 10H18ZM2 6.500 4 10H0ZM11 13 13 16H9Z" fill="#e02020" /></symbol>
      <symbol id="i-tensor" viewBox="0 0 22 22"><path d="M11 1 20.500 5.500V16.500L11 21.500 1.500 16.500V5.500Z" fill="#d8d8e8" stroke="#222" stroke-width="1.300" /><path d="M1.500 5.500 11 10 20.500 5.500M11 10V21" fill="none" stroke="#222" stroke-width="1.200" /><path d="M6 9V15M15.500 9V15M11 2V6" stroke="#e02020" stroke-width="1.500" /><path d="M3 13 9 17M8 5 14 7" stroke="#2020d8" stroke-width="1.500" /><path d="M13 17 19 13M14 4 8 8" stroke="#18a020" stroke-width="1.500" /></symbol>
      <symbol id="i-deform" viewBox="0 0 22 22"><g opacity=".35"><use href="#p-tube" x="4" y="4" width="18" height="18" /></g><use href="#p-tube" x="0" y="0" width="19" height="21" /><path d="M20.500 5V10M19 8 20.500 10 22 8" fill="none" stroke="#e02020" /></symbol>
      <symbol id="i-free-body" viewBox="0 0 22 22"><path d="M9 9H18V14H19V21H9V19H4V12H9Z" fill="#f8e41c" stroke="#e08c10" stroke-width="1.500" /><path d="M10 0H13V8H16L11.500 14 7 8H10Z" fill="#d81c1c" /></symbol>
      <symbol id="i-derived" viewBox="0 0 22 22"><path d="M1 5 7 4 16 1V11L8 15 1 17Z" fill="#fff" stroke="#888" /><path d="M4.500 4.500V16" stroke="#18a0c0" stroke-width="1.300" /><path d="M8 4V15" stroke="#2030e0" stroke-width="1.600" /><path d="M12 3V12" stroke="#20a020" stroke-width="1.300" /><path d="M16 2V12" stroke="#e03020" stroke-width="1.800" /><path d="M9 18 11 21 13 13.500H22" fill="none" stroke="#111" /></symbol>
      <symbol id="i-stream" viewBox="0 0 22 22"><use href="#p-tube" x="1" y="1" width="19" height="21" /><path d="M2 7Q8 3 12 7T20 6" fill="none" stroke="#18a020" stroke-width="1.300" /><path d="M2 11Q8 7 12 11T21 10" fill="none" stroke="#2020d8" stroke-width="1.300" /><path d="M2 15Q8 11 12 15T21 14" fill="none" stroke="#e02020" stroke-width="1.300" /></symbol>
      <symbol id="i-dish" viewBox="0 0 22 22"><path d="M8 15 6 21H17L14 17" fill="#888" /><path d="M3 1C-1 10 5 20 18 19C17 12 10 4 3 1Z" fill="#9494bc" stroke="#54547c" /><path d="M4 3Q8 13 17 18M20 4 4 3M20 4 17 18M20 4 10 12" fill="none" stroke="#555" /></symbol>
      <symbol id="i-query" viewBox="0 0 22 22"><path d="M4 2H21.500V21H1V8Z" fill="#f4f4f4" stroke="#777" /><path d="M9 3H21V6H9Z" fill="#b8bcc8" /><path d="M12 7V20M14 10H19M14 13H19M14 16H19" stroke="#aaa" stroke-width="1.300" /><circle cx="5.500" cy="5.500" r="5" fill="#1c2c9c" /><path d="M5.500 2.500V3.800M5.500 5V8.800" stroke="#fff" stroke-width="1.600" /></symbol>
      <symbol id="i-measure" viewBox="0 0 22 22"><path d="M9 14V9M9 14 2 20M9 14 15 20" stroke="#7c7ca4" stroke-width="2.400" /><circle cx="15" cy="5" r="4.300" fill="#b8dcf8" stroke="#5a7aa8" stroke-width="1.300" /><path d="M18 8 21 12" stroke="#888" stroke-width="1.600" /></symbol>
      <symbol id="i-section" viewBox="0 0 22 22"><path d="M6 7H16V17H6Z" fill="#7c7cb0" stroke="#333" /><path d="M8 7V1M6 3 8 1 10 3M16 8H21M19 6 21.500 8 19 10M14 17V21M12 19 14 21.500 16 19M6 15H1M3 13 1 15 3 17" fill="none" stroke="#111" stroke-width="1.300" /></symbol>
      <symbol id="i-bend" viewBox="0 0 22 22"><path d="M2 5Q14 4 16 19" fill="none" stroke="#444" stroke-width="7.500" /><path d="M2 5Q14 4 16 19" fill="none" stroke="#f0e020" stroke-width="5.500" /><path d="M7 5Q14 6 15.500 14" fill="none" stroke="#70c828" stroke-width="3" /><path d="M9 2 8 9M16 7 10 11M19 14 12 15" stroke="#c86010" /></symbol>
      <symbol id="i-trace" viewBox="0 0 22 22"><use href="#p-tube" x="1" y="1" width="18" height="21" /><path d="M1 10 9 2M1 7V10H4M6 2H9V5" fill="none" stroke="#111" /></symbol>
      <symbol id="i-note" viewBox="0 0 22 22"><path d="M11 2C17 2 21 5 21 9.500S17 17 12 17L7 21 8 16.500C4 16 1 13 1 9.500 1 5 5 2 11 2Z" fill="#a8a8a8" stroke="#888" /><path d="M5 7H9M11 7H17M5 10H12M14 10H17M7 13H15" stroke="#555" stroke-width="1.100" /></symbol>
      <symbol id="i-frames" viewBox="0 0 22 22"><g opacity=".35"><use href="#p-tube" x="4" y="2" width="18" height="19" /></g><g opacity=".6"><use href="#p-tube" x="2" y="1" width="18" height="20" /></g><use href="#p-tube" x="0" y="1" width="17" height="20" /></symbol>
      <symbol id="i-view-cam" viewBox="0 0 22 22"><path d="M3 4Q9 5 15 1V7Q9 10 3 9ZM0 9Q5 10 10 8V17L0 18Z" fill="#8484b0" stroke="#60608c" /><use href="#p-vid" x="5" y="10" width="17" height="11" /></symbol>
      <symbol id="i-curves" viewBox="0 0 22 22"><path d="M1 7Q5 1 11 5T21 6" fill="none" stroke="#e01c1c" stroke-width="2" /><path d="M9 9Q16 9 20 1" fill="none" stroke="#2424e0" stroke-width="2" /><path d="M1 9H8L11 12V21.500H1Z" fill="#fff" stroke="#222" /><path d="M3 12H5M6 12H8M3 14.500H5M6 14.500H9M3 17H5M6 17H9M3 19.500H5M6 19.500H9" stroke="#222" /></symbol>
      <symbol id="i-b-mode" viewBox="0 0 22 22"><use href="#p-ball" width="22" height="22" /><path d="M6 9H16M6 14 8 13 11 12 14 9.500M6 14H11" fill="none" stroke="#fff" stroke-width="1.200" /></symbol>
      <symbol id="i-b-first" viewBox="0 0 22 22"><use href="#p-ball" width="22" height="22" /><path d="M7 6H9.500V16H7ZM15.500 6V16L9.500 11Z" fill="#fff" /></symbol>
      <symbol id="i-b-prev" viewBox="0 0 22 22"><use href="#p-ball" width="22" height="22" /><path d="M10.500 6V16L4 11ZM17 6V16L10.500 11Z" fill="#fff" /></symbol>
      <symbol id="i-b-play" viewBox="0 0 22 22"><use href="#p-ball" width="22" height="22" /><path d="M8 5.500V16.500L16.500 11Z" fill="#fff" /></symbol>
      <symbol id="i-b-next" viewBox="0 0 22 22"><use href="#p-ball" width="22" height="22" /><path d="M5 6V16L11.500 11ZM11.500 6V16L18 11Z" fill="#fff" /></symbol>
      <symbol id="i-b-last" viewBox="0 0 22 22"><use href="#p-ball" width="22" height="22" /><path d="M6.500 6V16L12.500 11ZM12.500 6H15V16H12.500Z" fill="#fff" /></symbol>
      <symbol id="i-b-gear" viewBox="0 0 22 22"><use href="#p-ball" width="22" height="22" /><circle cx="11" cy="11" r="4" fill="none" stroke="#fff" stroke-width="3" /><path d="M11 4V7M11 15V18M4 11H7M15 11H18M6 6 8 8M14 14 16 16M16 6 14 8M6 16 8 14" stroke="#fff" stroke-width="2.400" /></symbol>
      <symbol id="i-stack" viewBox="0 0 16 16"><path d="M1 2.500H7V12.500H1Z" fill="#fff" stroke="#222" /><path d="M4 4.500H10V14H4Z" fill="#fff" stroke="#222" /><path d="M7 6.500H13V15.500H7Z" fill="#fff" stroke="#222" /><path d="M9 9H12M9 11H12M9 13H12" stroke="#777" /><path d="M9 3Q12 0 14 4M11.500 3.500H15V.500" fill="none" stroke="#111" stroke-width="1.200" /></symbol>
      <symbol id="i-logo" viewBox="0 0 16 17"><path d="M.5 3 8 .500 15.500 3 14.500 11 8 16.500 1.500 11Z" fill="#444" /><path d="M2 3.500 8 1 14 3.500 8 7Z" fill="#e02a20" /><path d="M1.500 5 7.500 8.500V15L2.500 10.500Z" fill="#f0a01c" /><path d="M14.500 5 8.500 8.500V15L13.500 10.500Z" fill="#28a0e0" /></symbol>
      <symbol id="i-chev" viewBox="0 0 8 7"><path d="M1 1 4 4 7 1" fill="none" stroke="#555" stroke-width="2" /></symbol>
    </svg>

    <header class="titlebar">
      <svg class="logo"><use href="#i-logo" /></svg>
      <h1>Untitled - HyperWorks 2019</h1>
      <div class="caption">
        <button type="button" aria-label="Minimize"><svg viewBox="0 0 12 12"><path d="M1 6.500H11" /></svg></button>
        <button type="button" aria-label="Restore"><svg viewBox="0 0 12 12"><path d="M1.500 3.500H8.500V10.500H1.500ZM3.500 3V1.500H10.500V8.500H9" /></svg></button>
        <button type="button" aria-label="Close"><svg viewBox="0 0 12 12"><path d="M1 1 11 11M11 1 1 11" /></svg></button>
      </div>
    </header>

    <nav class="menubar"><button v-for="m in menus" :key="m" type="button">{{ m }}</button></nav>

    <div class="toolbar top">
      <template v-for="(group, gi) in topGroups" :key="gi">
        <span class="grip"></span>
        <template v-for="tool in group" :key="tool.icon">
          <span v-if="tool.icon === 'sep'" class="sep"></span>
          <button v-else type="button" class="tool" :class="{ off: tool.off }" :aria-label="tool.label">
            <span class="cell"><Icon :name="tool.icon" /></span>
            <span v-if="tool.drop" class="drop"></span>
          </button>
        </template>
      </template>
      <div class="pager">
        <button type="button" class="tool" aria-label="Previous page"><span class="cell"><Icon name="nav" /></span></button>
        <button type="button" class="tool flip" aria-label="Next page"><span class="cell"><Icon name="nav" /></span></button>
        <input v-model="page" aria-label="Page" />
        <span>of 1</span>
      </div>
    </div>

    <div class="body">
      <aside class="dock">
        <div class="tabs" role="tablist">
          <button type="button" role="tab">Session</button>
          <button type="button" role="tab" class="current" aria-selected="true">Results
            <svg viewBox="0 0 9 9"><path d="M1 1 8 8M8 1 1 8" /></svg>
          </button>
        </div>
        <div class="browser">
          <div class="row tools">
            <button v-for="tool in browserTools" :key="tool.icon" type="button" class="tool" :class="{ active: tool.active }" :aria-label="tool.label">
              <span class="cell"><Icon :name="tool.icon" /></span>
            </button>
          </div>
          <div v-for="n in 3" :key="n" class="combo-row">
            <div class="spin">
              <button type="button" aria-label="Previous"><i class="tri up"></i></button>
              <button type="button" aria-label="Next"><i class="tri"></i></button>
            </div>
            <div class="pick flat">
              <select :aria-label="'Selection ' + n"><option></option></select>
              <svg class="chev"><use href="#i-chev" /></svg>
            </div>
          </div>
          <div class="search">
            <input v-model="search" type="text" placeholder="Enter Search String..." aria-label="Search" />
            <svg class="lens" viewBox="0 0 12 12"><circle cx="5" cy="5" r="4" /><path d="M8 8 11 11" /></svg>
            <svg class="chev"><use href="#i-chev" /></svg>
          </div>
          <div class="row eyes">
            <button v-for="tool in treeTools" :key="tool.icon" type="button" class="tool" :aria-label="tool.label">
              <span class="cell"><Icon :name="tool.icon" /></span>
            </button>
            <span class="fill"></span>
            <button v-for="tool in pickTools" :key="tool.icon" type="button" class="tool" :aria-label="tool.label">
              <span class="cell"><Icon :name="tool.icon" /></span>
              <span v-if="tool.drop" class="drop"></span>
            </button>
          </div>
          <div class="sheet entities">
            <table>
              <thead>
                <tr>
                  <th class="sorted"><svg viewBox="0 0 7 4" class="sort"><path d="M.5 3.500 3.500.500 6.500 3.500" /></svg>Entities</th>
                  <th class="sq"><Icon name="info" class="mini" /></th>
                  <th class="sq">ID</th>
                  <th class="sq"><Icon name="wheel" class="small" /></th>
                  <th class="sq"><Icon name="part" class="mini" /></th>
                  <th></th>
                </tr>
              </thead>
            </table>
          </div>
          <div class="splitter"><svg viewBox="0 0 6 7"><path d="M.5.500 3 3 5.500.500M.5 3.500 3 6 5.500 3.500" /></svg></div>
          <div class="sheet props">
            <table><thead><tr><th>Name</th><th>Value</th></tr></thead></table>
          </div>
        </div>
      </aside>

      <main class="work">
        <div class="stage">
          <div class="side">
            <span class="hgrip"></span>
            <button v-for="tool in sideA" :key="tool.icon" type="button" class="tool first" :aria-label="tool.label">
              <span class="cell"><Icon :name="tool.icon" /></span>
            </button>
            <span class="hgrip"></span>
            <button v-for="tool in sideB" :key="tool.icon" type="button" class="tool" :aria-label="tool.label">
              <span class="cell"><Icon :name="tool.icon" /></span>
              <span v-if="tool.drop" class="drop"></span>
            </button>
          </div>
          <div class="canvas">
            <svg class="triad" width="90" height="90" viewBox="0 0 90 90">
              <path d="M8 80V45M8 29V45M5 44H11L8 27ZM6.500 44 8 33 9.500 44" fill="none" stroke="#0f0" stroke-width="1.200" />
              <path d="M9 82H39M39 78V86L58 82.500V81.500ZM39 80 58 82 39 84" fill="none" stroke="#f00" stroke-width="1.200" />
              <path d="M5.500 82 8 79.500 10.500 82 8 84.500ZM8 79V85M5 82H11" fill="none" stroke="#00f" stroke-width="1.200" />
              <text x="8" y="19">Y</text><text x="8" y="78">Z</text><text x="67" y="78">X</text>
            </svg>
          </div>
        </div>

        <div class="toolbar lower">
          <span class="grip"></span>
          <button v-for="tool in modeTools" :key="tool.icon" type="button" class="tool" :aria-label="tool.label">
            <span class="cell"><Icon :name="tool.icon" /></span><span class="drop"></span>
          </button>
          <span class="grip"></span>
          <button v-for="tool in colorTools" :key="tool.icon" type="button" class="tool" :aria-label="tool.label">
            <span class="cell"><Icon :name="tool.icon" /></span>
          </button>
          <div class="pick flat comp">
            <select aria-label="Color by"><option>By Comp</option></select>
            <svg class="chev"><use href="#i-chev" /></svg>
          </div>
          <button v-for="tool in meshTools" :key="tool.icon" type="button" class="tool" :aria-label="tool.label">
            <span class="cell"><Icon :name="tool.icon" /></span>
            <span v-if="tool.drop" class="drop"></span>
          </button>
          <template v-for="(group, gi) in [plotTools, noteTools, playTools]" :key="gi">
            <span class="grip"></span>
            <button v-for="tool in group" :key="tool.icon" type="button" class="tool" :aria-label="tool.label">
              <span class="cell"><Icon :name="tool.icon" /></span>
              <span v-if="tool.drop" class="drop"></span>
            </button>
          </template>
          <div class="sliders">
            <input v-model.number="speed" type="range" class="speed" aria-label="Animation speed" />
            <input v-model.number="frame" type="range" class="frame" aria-label="Current frame" />
          </div>
          <button type="button" class="tool" aria-label="Animation controls"><span class="cell"><Icon name="b-gear" /></span></button>
        </div>

        <section class="panel">
          <p class="heading">Load model and results:</p>
          <div class="line">
            <label class="check"><input v-model="loadModel" type="checkbox" />Load model</label>
            <button type="button" class="browse" aria-label="Browse model"><svg><use href="#p-folder" /></svg></button>
            <input v-model="modelFile" type="text" class="path" aria-label="Model file" />
            <label class="check tail muted"><input type="checkbox" disabled />Overlay</label>
          </div>
          <div class="line">
            <label class="check"><input v-model="loadResults" type="checkbox" />Load results</label>
            <button type="button" class="browse" aria-label="Browse results"><svg><use href="#p-folder" /></svg></button>
            <input v-model="resultFile" type="text" class="path" aria-label="Result file" />
            <button type="button" class="tail stack" aria-label="Copy from model"><svg><use href="#i-stack" /></svg></button>
          </div>
          <div class="actions">
            <label for="template">Result-Math template:</label>
            <div class="pick sunken">
              <select id="template"><option>Standard</option></select>
              <span class="knob"><i class="tri"></i></span>
            </div>
            <button type="button" class="push reader">Reader Options...</button>
            <button type="button" class="push">Apply</button>
          </div>
        </section>
      </main>
    </div>

    <footer class="status">Ready</footer>
  </div>
</template>

<style>
body { margin: 0; background: #f0f0f0; }
.glyph { font: bold 9px "Noto Sans", sans-serif; fill: #555; }
.glyph.tiny { font-size: 8px; }
.glyph.wide { font-size: 10px; }
.glyph.info { font: italic bold 18px "Liberation Serif", serif; fill: #2c3cc8; }
</style>

<style scoped>
.app { display: flex; flex-direction: column; min-height: 100vh; background: #f0f0f0; color: #111; font: 11px/14px "Liberation Sans", Arial, sans-serif; }
.app *, .app *::before { box-sizing: border-box; }
.defs { display: block; flex: none; height: 0; }
button { margin: 0; padding: 0; border: 0; background: none; color: inherit; font: inherit; }
input, select { margin: 0; padding: 0; border: 0; border-radius: 0; outline: 0; background: #fff; color: inherit; font: inherit; }
svg { display: block; flex: none; }

.titlebar { display: flex; align-items: center; height: 22px; padding: 0 1px; background: #fff; }
.logo { width: 17px; height: 17px; margin-right: 5px; }
h1 { flex: 1; margin: 0; font: 13px/20px "Noto Sans", sans-serif; }
.caption { display: flex; }
.caption button { display: grid; place-items: center; width: 46px; height: 20px; }
.caption svg { width: 12px; height: 12px; fill: none; stroke: #000; }
.menubar { display: flex; gap: 15px; height: 19px; padding-left: 7px; background: #fff; font: 12px/21px "Noto Sans", sans-serif; }

.toolbar { display: flex; align-items: center; }
.toolbar.top { height: 34px; }
.grip { flex: none; width: 13px; height: 20px; background: repeating-linear-gradient(#444 0 2px, transparent 2px 6px) center / 2px 100% no-repeat; }
.grip:first-child { width: 11px; }
.sep { flex: none; width: 10px; height: 26px; background: linear-gradient(#999, #999) center / 1px 100% no-repeat; }
.tool { display: flex; align-items: center; flex: none; height: 28px; }
.cell { display: grid; place-items: center; width: 28px; height: 28px; }
.ico { width: 22px; height: 22px; overflow: visible; }
.off { opacity: .28; }
.flip .ico { transform: scaleX(-1); }
.drop { width: 10px; height: 4px; padding-left: 1px; }
.drop::before { content: ""; display: block; width: 0; border: solid transparent; border-width: 3px 3px 0; border-top-color: #000; }
.pager { display: flex; align-items: center; margin-left: auto; padding-right: 23px; font-size: 11px; }
.pager input { width: 36px; height: 19px; margin: 0 3px 0 1px; padding-right: 3px; border: 1px solid #777; text-align: right; }

.body { display: flex; flex: 1; padding: 2px 3px 0 0; }
.dock { display: flex; flex-direction: column; flex: none; width: 432px; padding-right: 4px; border-right: 1px solid #000; }
.tabs { display: flex; align-items: flex-end; flex: none; height: 21px; padding-left: 4px; font: 10px/18px "Liberation Mono", monospace; }
.tabs button { display: flex; align-items: center; gap: 7px; height: 19px; padding: 3px 2px 0; border: solid #d9d9d9; border-width: 1px 0 0 1px; }
.tabs button:first-child { width: 62px; }
.tabs .current { width: 68px; height: 21px; border-width: 1px 1px 0; background: #fff; }
.tabs svg { width: 9px; height: 9px; fill: none; stroke: #333; stroke-width: 1.3; }
.browser { display: flex; flex-direction: column; flex: 1; margin: 0 0 3px 2px; padding-right: 1px; border: solid #dcdcdc; border-width: 1px 1px 0; }
.row { display: flex; align-items: center; }
.tools { height: 28px; }
.tools .tool.active { background: #fdc27e; box-shadow: inset 0 0 0 1px #c9a273; }
.combo-row { display: flex; gap: 1px; height: 20px; }
.spin { display: flex; flex-direction: column; gap: 1px; width: 12px; }
.spin button { display: grid; place-items: center; width: 12px; height: 9px; border: 1px solid #888; background: #f4f4f4; }
.tri { width: 0; border: solid transparent; border-width: 4px 3px 0; border-top-color: #000; }
.tri.up { border-width: 0 3px 4px; border-color: transparent transparent #000; }
.pick { position: relative; flex: 1; }
.pick select { display: block; width: 100%; height: 16px; appearance: none; border: 1px solid #777; }
.flat .chev { position: absolute; top: 1px; right: 1px; }
.chev { width: 12px; height: 14px; padding: 3px 2px; background: #f0f0f0; pointer-events: none; }
.search { display: flex; align-items: center; height: 18px; margin-left: 1px; border: 1px solid #777; background: #fff; }
.search input { flex: 1; height: 16px; padding-left: 4px; font-size: 11px; }
.search input::placeholder { color: #666; opacity: 1; }
.lens { width: 12px; height: 12px; margin-right: 3px; fill: none; stroke: #555; stroke-width: 1.2; }
.eyes { height: 32px; padding-right: 2px; }
.fill { flex: 1; }
.sheet { border: 1px solid #abb5bd; background: #fff; }
.sheet table { width: 100%; border-collapse: collapse; background: #f0f0f0; text-align: left; }
.sheet th { height: 20px; padding: 0; border-bottom: 1px solid #abb5bd; font-weight: normal; }
.entities { height: 281px; }
.entities th { padding-top: 2px; border-right: 1px solid #abb5bd; font: 10px/18px "Liberation Mono", monospace; }
.entities th:last-child { border-right: 0; }
.entities .sorted { position: relative; width: 52px; padding-left: 2px; background: #dcebf5; }
.sort { position: absolute; top: 2px; left: 22px; width: 7px; height: 4px; fill: none; stroke: #4a7a9c; }
.entities .sq { width: 25px; text-align: center; }
.sq svg { margin: 0 auto; }
.mini { width: 18px; height: 18px; }
.small { width: 15px; height: 15px; }
.splitter { display: flex; justify-content: flex-end; height: 7px; padding-right: 4px; }
.splitter svg { width: 6px; height: 7px; fill: none; stroke: #333; }
.props { flex: 1; }
.props table { font: 12px/20px "Noto Sans", sans-serif; }
.props th { height: 22px; padding-top: 2px; border-color: #d4d8dc; }
.props th:first-child { width: 41px; padding-left: 2px; }

.work { display: flex; flex-direction: column; flex: 1; min-width: 0; padding: 16px 6px 3px 0; border-right: 1px solid #000; }
.stage { display: flex; flex: 1; }
.side { display: flex; flex-direction: column; flex: none; width: 45px; padding-left: 5px; }
.side .first { margin-left: 5px; }
.hgrip { width: 22px; height: 12px; margin-left: 7px; background: repeating-linear-gradient(90deg, #444 0 2px, transparent 2px 6px) center / 100% 2px no-repeat; }
.hgrip:first-child { height: 10px; }
.canvas { position: relative; flex: 1; border: 1px solid #20e8e8; background: linear-gradient(#2b557f, #a3a3a3); }
.triad { position: absolute; left: 8px; bottom: 8px; }
.triad text { fill: #fff; font: 12px "Liberation Sans", Arial, sans-serif; }

.lower { height: 32px; padding-left: 3px; }
.comp { flex: none; width: 65px; }
.comp select { height: 17px; padding-left: 2px; }
.sliders { display: flex; flex-direction: column; flex: none; gap: 3px; width: 160px; margin: 0 1px; }
.sliders input { display: block; width: 100%; appearance: none; background: #c8c8c8; border-top: 1px solid #888; }
.speed { height: 10px; }
.frame { height: 5px; }
.sliders input::-webkit-slider-thumb { appearance: none; width: 20px; height: 9px; border: solid #000; border-width: 0 1px 2px 0; background: linear-gradient(90deg, #fff 9px, #000 9px 10px, #fff 10px); }
.sliders .frame::-webkit-slider-thumb { height: 4px; background: #c8c8c8; }

.panel { margin: 5px 0 0 3px; padding: 12px 0 4px; border-top: 1px solid #888; border-bottom: 2px solid #000; box-shadow: inset 0 1px #fff; }
.heading { margin: 0 0 6px; padding-left: 6px; }
.line { display: flex; align-items: center; height: 27px; }
.check { display: flex; align-items: center; gap: 6px; flex: none; width: 96px; margin-left: 24px; }
.check input { position: relative; width: 13px; height: 13px; appearance: none; border: solid; border-width: 2px 1px 1px 2px; border-color: #222 #fff #fff #222; background: #fff; }
.check input:checked::before { content: ""; position: absolute; inset: 1px; background: #000; clip-path: polygon(0 35%, 35% 68%, 100% 5%, 100% 42%, 35% 100%, 0 68%); }
.browse { flex: none; margin-right: 3px; }
.browse svg { width: 16px; height: 16px; }
.path { flex: 1; min-width: 0; height: 23px; border: solid; border-width: 2px 1px 1px 2px; border-color: #111 #ddd #ddd #222; }
.tail { flex: none; width: 65px; margin-left: 7px; }
.muted { color: #777; }
.muted input { background: #f0f0f0; }
.stack svg { width: 16px; height: 16px; }
.actions { display: flex; align-items: center; justify-content: flex-end; margin-top: 53px; padding-right: 5px; }
.actions label { margin-right: 18px; }
.pick.sunken { flex: none; width: 130px; margin-right: 5px; }
.sunken select { height: 23px; padding-left: 2px; border: solid; border-width: 2px 1px 1px 2px; border-color: #222 #ddd #ddd #222; }
.knob { position: absolute; top: 2px; right: 1px; display: grid; place-items: center; width: 14px; height: 20px; border: solid; border-width: 1px 1px 2px 1px; border-color: #fff #000 #000 #fff; background: #f0f0f0; pointer-events: none; }
.push { width: 78px; height: 23px; border: solid; border-width: 1px 2px 2px 1px; border-color: #fff #222 #222 #fff; }
.push.reader { width: 102px; margin-right: 4px; }
.status { height: 23px; padding: 4px 4px 0; font: 11px/18px "Noto Sans", sans-serif; }
</style>
